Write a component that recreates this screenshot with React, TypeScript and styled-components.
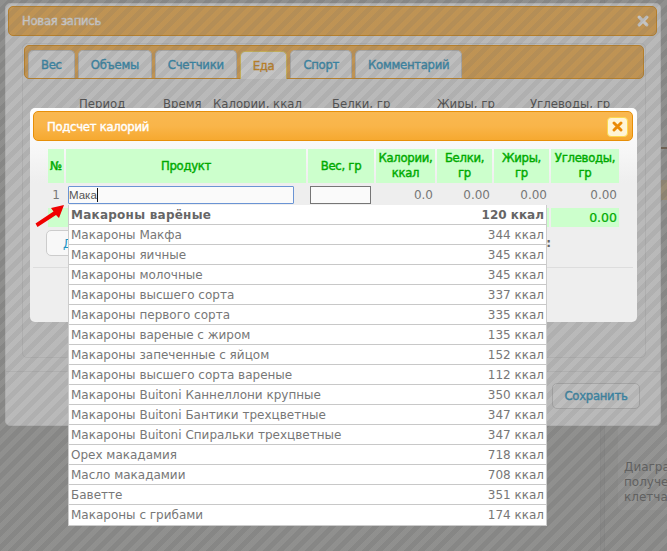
import React from 'react'
import styled, { createGlobalStyle, css } from 'styled-components'

const tabs = ['Вес', 'Объемы', 'Счетчики', 'Еда', 'Спорт', 'Комментарий']
const summaryColumns = [
  { title: 'Период', width: 84 },
  { title: 'Время', width: 50 },
  { title: 'Калории, ккал', width: 119 },
  { title: 'Белки, гр', width: 105 },
  { title: 'Жиры, гр', width: 93 },
  { title: 'Углеводы, гр', width: 100 },
]
const products = [
  ['Макароны варёные', '120 ккал'],
  ['Макароны Макфа', '344 ккал'],
  ['Макароны яичные', '345 ккал'],
  ['Макароны молочные', '345 ккал'],
  ['Макароны высшего сорта', '337 ккал'],
  ['Макароны первого сорта', '335 ккал'],
  ['Макароны вареные с жиром', '135 ккал'],
  ['Макароны запеченные с яйцом', '152 ккал'],
  ['Макароны высшего сорта вареные', '112 ккал'],
  ['Макароны Buitoni Каннеллони крупные', '350 ккал'],
  ['Макароны Buitoni Бантики трехцветные', '347 ккал'],
  ['Макароны Buitoni Спиральки трехцветные', '347 ккал'],
  ['Орех макадамия', '718 ккал'],
  ['Масло макадамии', '708 ккал'],
  ['Баветте', '351 ккал'],
  ['Макароны с грибами', '174 ккал'],
]

const CloseGlyph = ({ size, color }: { size: number; color: string }) => (
  <svg width={size} height={size} viewBox="0 0 12 12">
    <path d="M2.2 2.2 9.8 9.8M9.8 2.2 2.2 9.8" stroke={color} strokeWidth="3.2" strokeLinecap="round" fill="none" />
  </svg>
)

const App = (): JSX.Element => {
  return (
    <Screen>
      <GlobalStyle />
      <Page>
        <SideRule />
        <Rail>
          <BrownRule />
          <TanBlock />
          <Note>
            Диаграмма
            <br />
            полученная
            <br />
            клетчатка
          </Note>
        </Rail>
      </Page>
      <Overlay />
      <OuterDialog>
        <OuterTitle>
          Новая запись
          <CloseGlyph size={12} color="#ffffff" />
        </OuterTitle>
        <Panel>
          <TabBar>
            {tabs.map((t) => (
              <Tab key={t} $active={t === 'Еда'}>{t}</Tab>
            ))}
          </TabBar>
          <SummaryHead>
            {summaryColumns.map((c) => (
              <SummaryCol key={c.title} style={{ width: c.width }}>{c.title}</SummaryCol>
            ))}
          </SummaryHead>
        </Panel>
        <OuterFooter>
          <SaveButton>Сохранить</SaveButton>
        </OuterFooter>
      </OuterDialog>
      <Overlay />
      <InnerDialog>
        <InnerTitle>
          Подсчет калорий
          <CloseButton><CloseGlyph size={11} color="#ea8a06" /></CloseButton>
        </InnerTitle>
        <CalcTable>
          <colgroup>
            <col width={16} />
            <col width={240} />
            <col width={66} />
            <col width={59} />
            <col width={55} />
            <col width={55} />
            <col width={68} />
          </colgroup>
          <thead>
            <tr>
              <HeadCell>№</HeadCell>
              <HeadCell>Продукт</HeadCell>
              <HeadCell>Вес, гр</HeadCell>
              <HeadCell>Калории, ккал</HeadCell>
              <HeadCell>Белки, гр</HeadCell>
              <HeadCell>Жиры, гр</HeadCell>
              <HeadCell>Углеводы, гр</HeadCell>
            </tr>
          </thead>
          <tbody>
            <tr>
              <NumberCell>1</NumberCell>
              <ProductCell>
                <ProductInput>Мака<Caret /></ProductInput>
                <Suggestions>
                  {products.map(([name, kcal], i) => (
                    <Suggestion key={name} $top={i === 0}>
                      <SuggestionName $top={i === 0}>{name}</SuggestionName>
                      <span>{kcal}</span>
                    </Suggestion>
                  ))}
                </Suggestions>
              </ProductCell>
              <ValueCell><WeightInput /></ValueCell>
              <ValueCell>0.0</ValueCell>
              <ValueCell>0.00</ValueCell>
              <ValueCell>0.00</ValueCell>
              <ValueCell>0.00</ValueCell>
            </tr>
            <tr>
              <TotalCell colSpan={6} />
              <TotalCell>0.00</TotalCell>
            </tr>
          </tbody>
        </CalcTable>
        <ActionRow>
          <AddButton>Добавить</AddButton>
          <ActionLabel>Итого:</ActionLabel>
        </ActionRow>
        <InnerFooter />
        <Arrow width="32" height="26" viewBox="0 0 32 26">
          <path d="M1.5 20.5 19.5 8.5 17 5 30 2 25 15 22 12 3.5 24Z" fill="#f00000" />
        </Arrow>
      </InnerDialog>
    </Screen>
  )
}

export default App

// heading text in the dialogs: tall like 12px but tighter than the real bold face
const heavy = css`
font-size: 11.7px;
font-weight: normal;
letter-spacing: -0.3px;
-webkit-text-stroke: 0.4px currentColor;
`

const GlobalStyle = createGlobalStyle`
html, body {
  margin: 0;
  padding: 0;
  background: #eeeeee;
  font-family: "DejaVu Sans", Verdana, sans-serif;
  font-size: 12px;
}
`
const Screen = styled.div`
position: relative;
width: 667px;
height: 551px;
overflow: hidden;
`
const Page = styled.div`
display: flex;
height: 551px;
padding-left: 600px;
box-sizing: border-box;
background: #d6d6d2;
`
const SideRule = styled.div`
width: 5px;
margin-right: 13px;
background: #cbcbc8;
border-left: 1px solid #c2c2bf;
border-right: 1px solid #c2c2bf;
box-sizing: border-box;
`
const Rail = styled.div`
flex: 1;
overflow: hidden;
display: flex;
flex-direction: column;
`
const BrownRule = styled.div`
height: 2px;
margin-top: 147px;
background: #7d5a36;
`
const TanBlock = styled.div`
height: 20px;
margin-top: 31px;
background: #e8c98e;
`
const Note = styled.div`
margin-top: 225px;
height: 85px;
padding: 35px 0 0 6px;
box-sizing: border-box;
background: #e2e2df;
border-radius: 4px 0 0 4px;
color: #555555;
font-size: 12px;
line-height: 15px;
white-space: nowrap;
`
const Overlay = styled.div`
position: absolute;
inset: 0;
background: repeating-linear-gradient(
  135deg,
  rgba(102, 102, 102, 0.39) 0 5px,
  rgba(102, 102, 102, 0.46) 5px 10px
);
`
const OuterDialog = styled.div`
position: absolute;
left: 5px;
top: 3px;
width: 656px;
height: 423px;
box-sizing: border-box;
padding: 2px 3px 0 2px;
background: #eeeeee;
border: 1px solid #dddddd;
border-radius: 5px;
`
const OuterTitle = styled.div`
display: flex;
align-items: center;
justify-content: space-between;
height: 30px;
box-sizing: border-box;
padding: 0 7px 0 13px;
background: #f7b049;
border: 1px solid #e78f08;
border-radius: 5px;
color: #ffffff;
${heavy}
`
const Panel = styled.div`
margin: 7px 11px 0 14px;
height: 315px;
padding: 1px;
box-sizing: border-box;
border: 1px solid #dddddd;
border-radius: 5px;
`
const TabBar = styled.div`
display: flex;
align-items: flex-end;
gap: 3px;
height: 34px;
padding-left: 3px;
box-sizing: border-box;
background: #f7b049;
border: 1px solid #e78f08;
border-radius: 5px;
`
const Tab = styled.div<{ $active: boolean }>`
height: 28px;
margin-bottom: ${({ $active }) => ($active ? '-1px' : '0')};
padding: 0 12px;
display: flex;
align-items: center;
box-sizing: border-box;
background: ${({ $active }) => ($active ? '#ffffff' : '#f6f6f6')};
border: 1px solid ${({ $active }) => ($active ? '#fbd850' : '#cccccc')};
border-bottom: 0;
border-radius: 5px 5px 0 0;
color: ${({ $active }) => ($active ? '#eb8f00' : '#1c94c4')};
${heavy}
`
const SummaryHead = styled.div`
display: flex;
margin: 18px 0 0 55px;
color: #444444;
font-size: 11.7px;
line-height: 14px;
`
const SummaryCol = styled.div`
flex: none;
white-space: nowrap;
`
const OuterFooter = styled.div`
display: flex;
justify-content: flex-end;
margin: 13px -3px 0 -2px;
padding: 11px 20px 0 0;
border-top: 1px solid #dddddd;
`
const SaveButton = styled.div`
width: 88px;
height: 26px;
display: flex;
align-items: center;
justify-content: center;
box-sizing: border-box;
background: #f6f6f6;
border: 1px solid #cccccc;
border-radius: 5px;
color: #1c94c4;
${heavy}
`
const InnerDialog = styled.div`
position: absolute;
left: 30px;
top: 108px;
width: 607px;
height: 214px;
box-sizing: border-box;
padding: 3px 4px 3px 3px;
background: linear-gradient(#ffffff 0, #f6f6f6 45px, #eeeeee 75px);
border-radius: 5px;
`
const InnerTitle = styled.div`
display: flex;
align-items: center;
justify-content: space-between;
height: 30px;
box-sizing: border-box;
padding: 1px 4px 0 13px;
background: linear-gradient(#f9b851 0, #f9b54a 50%, #f6a930 100%);
border: 1px solid #e78f08;
border-radius: 5px;
color: #ffffff;
${heavy}
`
const CloseButton = styled.div`
width: 21px;
height: 20px;
display: flex;
align-items: center;
justify-content: center;
box-sizing: border-box;
background: #fff5d6;
border: 1px solid #fbd850;
border-radius: 4px;
`
const CalcTable = styled.table`
table-layout: fixed;
width: 575px;
margin: 6px 0 0 13px;
border-collapse: separate;
border-spacing: 2px;
`
const HeadCell = styled.th`
height: 34px;
padding: 0;
background: #ccffcc;
color: #00aa00;
line-height: 15px;
text-align: center;
${heavy}
`
const ValueCell = styled.td`
height: 21px;
padding: 0 2px 1px 0;
box-sizing: border-box;
color: #777777;
font-size: 12px;
text-align: right;
`
const NumberCell = styled(ValueCell)`
padding: 0 0 1px;
text-align: center;
`
const ProductCell = styled.td`
position: relative;
padding: 0;
`
const ProductInput = styled.div`
display: flex;
align-items: center;
width: 226px;
height: 18px;
margin: 0 0 1px 2px;
box-sizing: border-box;
background: #fafafa;
border: 1px solid #6a94d4;
border-radius: 1px;
color: #555555;
font-family: "Liberation Sans", Arial, sans-serif;
font-size: 11.5px;
`
const Caret = styled.span`
width: 1px;
height: 14px;
background: #111111;
`
const WeightInput = styled.div`
width: 61px;
height: 18px;
margin: 0 0 0 2px;
box-sizing: border-box;
background: #fafafa;
border: 1px solid #767676;
`
const Suggestions = styled.div`
position: absolute;
z-index: 2;
left: 2px;
top: 20px;
width: 479px;
box-sizing: border-box;
background: #ffffff;
border: 1px solid #cccccc;
border-top: 0;
`
const Suggestion = styled.div<{ $top: boolean }>`
display: flex;
justify-content: space-between;
height: 20px;
padding: 1px 2px 0;
box-sizing: border-box;
line-height: 18px;
border-bottom: 1px solid #c8c8c8;
color: ${({ $top }) => ($top ? '#666666' : '#777777')};
font-size: 12px;
font-weight: ${({ $top }) => ($top ? 'bold' : 'normal')};
&:last-child {
  border-bottom: 0;
}
`
const SuggestionName = styled.span<{ $top: boolean }>`
letter-spacing: ${({ $top }) => ($top ? '0.25px' : '0')};
`
const TotalCell = styled.td`
height: 19px;
padding: 0 2px 0 0;
background: #ccffcc;
color: #00aa00;
font-size: 12.5px;
-webkit-text-stroke: 0.2px currentColor;
text-align: right;
`
const ActionRow = styled.div`
display: flex;
justify-content: space-between;
align-items: center;
margin: 1px 82px 0 13px;
height: 26px;
`
const AddButton = styled.div`
width: 110px;
height: 26px;
padding: 6px 0 0 16px;
box-sizing: border-box;
background: #f8f8f8;
border: 1px solid #cccccc;
border-radius: 5px;
color: #1c94c4;
font-size: 12px;
`
const ActionLabel = styled.div`
color: #666666;
font-weight: bold;
font-size: 12px;
`
const InnerFooter = styled.div`
margin: 11px 0 0;
border-top: 1px solid #dddddd;
`
const Arrow = styled.svg`
position: absolute;
left: 4px;
top: 95px;
`
